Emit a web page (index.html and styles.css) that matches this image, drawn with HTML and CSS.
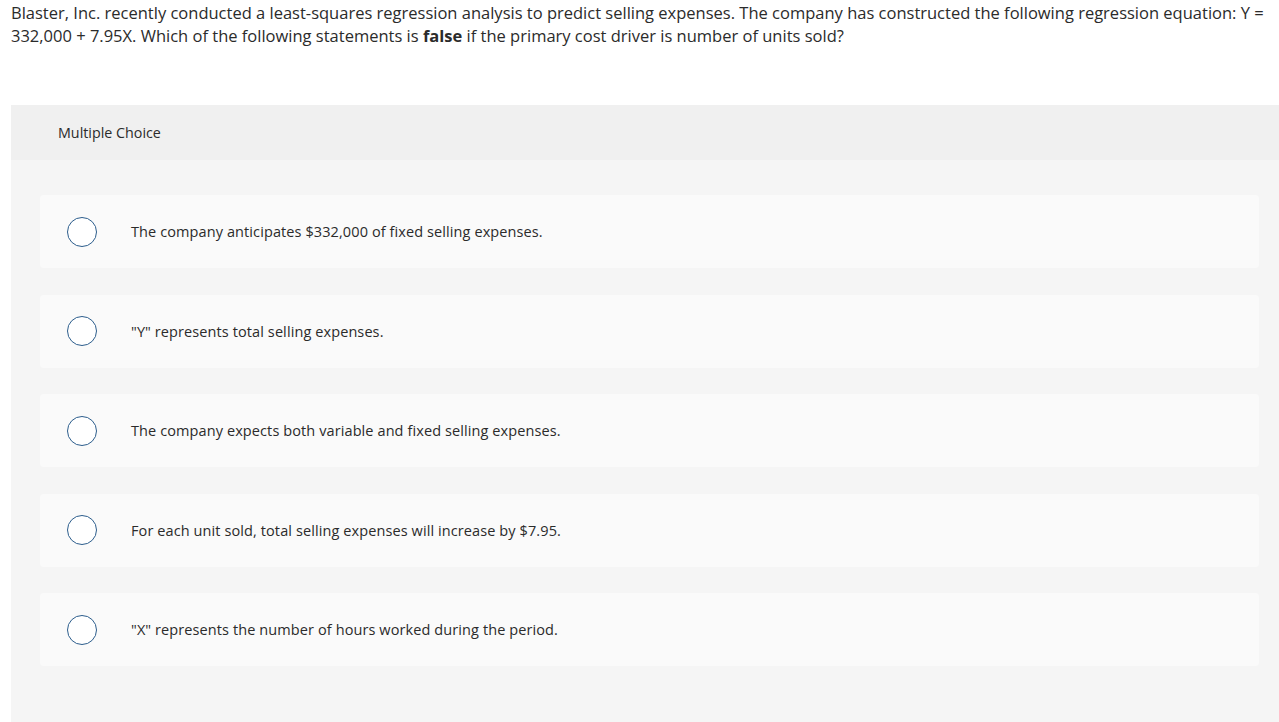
FILE: index.html
```
<!DOCTYPE html>
<html>
<head>
<meta charset="utf-8">
<link rel="stylesheet" href="styles.css">
</head>
<body>
<p class="question">Blaster, Inc. recently conducted a least-squares regression analysis to predict selling expenses. The company has constructed the following regression equation: Y = 332,000 + 7.95X. Which of the following statements is <b>false</b> if the primary cost driver is number of units sold?</p>
<section class="panel">
  <div class="panel-head">Multiple Choice</div>
  <div class="options">
    <div class="option"><span class="radio"></span><span class="label">The company anticipates $332,000 of fixed selling expenses.</span></div>
    <div class="option"><span class="radio"></span><span class="label">"Y" represents total selling expenses.</span></div>
    <div class="option"><span class="radio"></span><span class="label">The company expects both variable and fixed selling expenses.</span></div>
    <div class="option"><span class="radio"></span><span class="label">For each unit sold, total selling expenses will increase by $7.95.</span></div>
    <div class="option"><span class="radio"></span><span class="label">"X" represents the number of hours worked during the period.</span></div>
  </div>
</section>
</body>
</html>
```
FILE: styles.css
```
html, body { margin: 0; padding: 0; background: #fff; }
body { font-family: "Open Sans", "Liberation Sans", Arial, sans-serif; color: #2b2b2b; }
.question {
  margin: 0;
  padding: 1px 0 0 11px;
  font-size: 16.5px;
  line-height: 23px;
}
.question b { font-weight: 700; }
.panel {
  margin: 58px 0 0 11px;
  background: #f5f5f5;
  padding-bottom: 60px;
}
.panel-head {
  background: #f0f0f0;
  height: 55px;
  display: flex;
  align-items: center;
  padding-left: 47px;
  font-size: 14.3px;
}
.options {
  display: flex;
  flex-direction: column;
  gap: 26.5px;
  padding: 35px 20px 0 29px;
}
.option {
  background: #fafafa;
  border-radius: 4px;
  height: 73px;
  display: flex;
  align-items: center;
  padding-left: 27px;
}
.radio {
  width: 28px;
  height: 28px;
  border: 1.5px solid #2c5d8c;
  border-radius: 50%;
  background: #fff;
  flex: none;
}
.label {
  margin-left: 34px;
  font-size: 14.5px;
  letter-spacing: 0.1px;
  color: #2b2b2b;
}
```
